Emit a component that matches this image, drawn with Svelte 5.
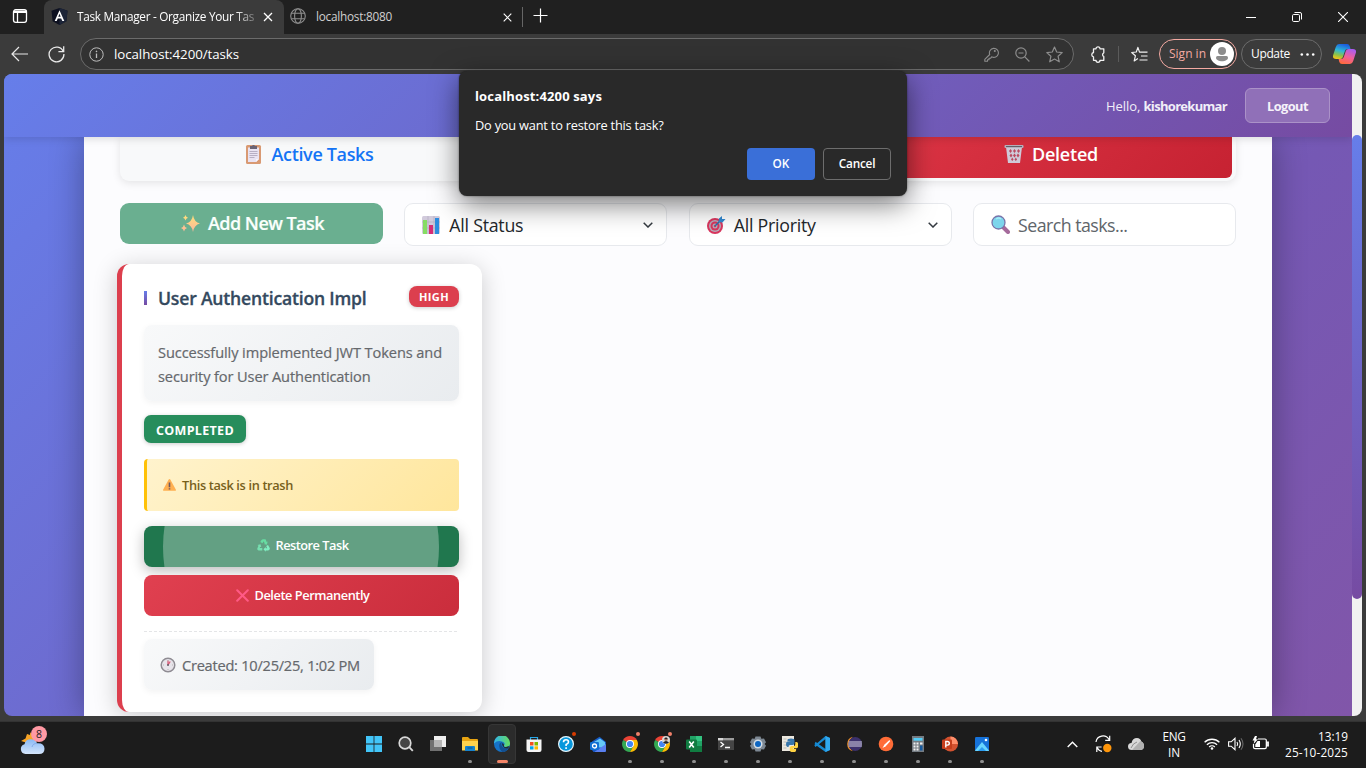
<script>
  // Spreads the letters of a label so that it fills the given width.
  function fit(node, width) {
    const n = node.textContent.length;
    const natural = node.getBoundingClientRect().width;
    node.style.letterSpacing = (width - natural) / n + 'px';
  }

  const apps = [
    { id: 'start' }, { id: 'search' }, { id: 'views' }, { id: 'files', open: true },
    { id: 'edge', active: true }, { id: 'store' }, { id: 'help', alert: '#d83b01' }, { id: 'outlook' },
    { id: 'chrome', open: true, alert: '#f0806a' }, { id: 'chromeuser', open: true, alert: '#f0806a' },
    { id: 'excel', open: true }, { id: 'terminal', open: true }, { id: 'settings', open: true },
    { id: 'python', open: true }, { id: 'code', open: true }, { id: 'eclipse', open: true },
    { id: 'postman', open: true }, { id: 'calc', open: true }, { id: 'ppt', open: true }, { id: 'photos', open: true }
  ];
</script>

{#snippet chrome()}
  <path d="M8 8L1.1 4A8 8 0 0 1 14.9 4z" fill="#ea4335" />
  <path d="M8 8L1.1 4A8 8 0 0 0 8 16l3.5-6z" fill="#34a853" />
  <path d="M8 4h6.9A8 8 0 0 1 8 16l3.5-6z" fill="#fbbc04" />
  <circle cx="8" cy="8" r="4" fill="#fff" /><circle cx="8" cy="8" r="3.1" fill="#4285f4" />
{/snippet}

<div class="window">
  <header class="tabstrip">
    <div class="workspace">
      <svg width="16" height="16" viewBox="0 0 16 16" fill="none" stroke="#fff" stroke-width="1.3"><rect x="1.5" y="1.7" width="13" height="12.6" rx="2.2" /><path d="M2 3.2h12M2 4.3h12M5.5 5v9" /></svg>
    </div>
    <div class="tab current">
      <svg width="17" height="17" viewBox="0 0 17 17"><path d="M8.5 0l8 2.8-1.1 10.5-6.900 3.700-6.900-3.700L.5 2.800z" fill="#0d1020" /><path d="M8.500 0l8 2.800-1.100 10.500-6.900 3.700z" fill="#1c2437" /><path d="M8.500 2.200L13.300 13h-2L10.200 10.400H6.800L5.700 13h-2zM8.500 5.700L7.300 8.800h2.400z" fill="#fff" fill-rule="evenodd" /></svg>
      <span class="tabname fade"><span use:fit={177}>Task Manager - Organize Your Tas</span></span>
      <svg class="x1" width="10" height="10" viewBox="0 0 10 10" stroke="#fff" stroke-width="1.300"><path d="M1 1l8 8M9 1L1 9" /></svg>
    </div>
    <div class="tab other">
      <svg width="16" height="16" viewBox="0 0 16 16" fill="none" stroke="#8d8d8d" stroke-width="1.100"><circle cx="8" cy="8" r="7.300" /><ellipse cx="8" cy="8" rx="3.400" ry="7.300" /><path d="M1.500 5.300h13M1.500 10.700h13" /></svg>
      <span class="tabname grey"><span use:fit={76}>localhost:8080</span></span>
      <svg class="x2" width="9" height="9" viewBox="0 0 9 9" stroke="#fff" stroke-width="1.100"><path d="M.7.7l7.600 7.600M8.300.7L.7 8.300" /></svg>
    </div>
    <i class="tabline"></i>
    <svg class="plus" width="15" height="15" viewBox="0 0 15 15" stroke="#fff" stroke-width="1.200"><path d="M7.500.5v14M.5 7.500h14" /></svg>
    <div class="controls">
      <svg width="10" height="10" viewBox="0 0 10 10" stroke="#fff"><path d="M0 5.500h10" /></svg>
      <svg width="10" height="10" viewBox="0 0 10 10" fill="none" stroke="#fff"><rect x=".5" y="2.500" width="7" height="7" rx="1.200" /><path d="M2.500.5H8a1.500 1.500 0 0 1 1.500 1.500v5.500" /></svg>
      <svg width="10" height="10" viewBox="0 0 10 10" stroke="#fff" stroke-width="1.100"><path d="M0 0l10 10M10 0L0 10" /></svg>
    </div>
  </header>

  <div class="toolbar">
    <svg class="back" width="17" height="16" viewBox="0 0 17 16" fill="none" stroke="#e8e8e8" stroke-width="1.200"><path d="M8 1L1 8l7 7M1 8h16" /></svg>
    <svg class="reload" width="17" height="18" viewBox="0 0 17 18" fill="none" stroke="#e8e8e8" stroke-width="1.300"><path d="M15.300 6.500A7.400 7.400 0 1 0 15.900 9M15.700 1.200v5.500h-5.300" /></svg>
    <div class="address">
      <svg width="15" height="15" viewBox="0 0 15 15" fill="none" stroke="#bdbdbd"><circle cx="7.500" cy="7.500" r="6.700" /><path d="M7.500 6.500v4.500" stroke-width="1.300" /><circle cx="7.500" cy="4.400" r=".6" fill="#bdbdbd" stroke-width=".4" /></svg>
      <span class="url"><span use:fit={125}>localhost:4200/tasks</span></span>
      <div class="addricons">
        <svg width="15" height="15" viewBox="0 0 15 15" fill="none" stroke="#8d8d8d" stroke-width="1.100" stroke-linejoin="round"><path d="M5.700 7.500L.8 12.400v1.900h2.700v-1.500H5v-1.500h1.500l1.200-1.500A4.500 4.500 0 1 0 5.700 7.500z" /><circle cx="10.800" cy="4" r=".5" /></svg>
        <svg width="15" height="15" viewBox="0 0 15 15" fill="none" stroke="#8d8d8d" stroke-width="1.200"><circle cx="6" cy="6" r="5.200" /><path d="M3.500 6h5M9.800 9.800l4.600 4.700" /></svg>
        <svg width="17" height="17" viewBox="0 0 17 17" fill="none" stroke="#8d8d8d" stroke-width="1.200" stroke-linejoin="round"><path d="M8.500 1l2.200 5 5.500.6-4.100 3.700 1.200 5.500-4.800-2.800-4.800 2.800 1.200-5.500L.8 6.600l5.500-.6z" /></svg>
      </div>
    </div>
    <svg class="ext" width="16" height="17" viewBox="0 0 16 17" fill="none" stroke="#f2f2f2" stroke-width="1.300" stroke-linejoin="round"><path d="M6 2.800A2 2 0 0 1 10 2.800H13.800V6.800A2 2 0 0 0 13.800 10.500V14.300H10A2 2 0 0 1 6 14.300H3.500V10.800A2.200 2.200 0 0 1 3.500 6.500V2.800z" /></svg>
    <i class="tooldivider"></i>
    <svg class="favs" width="17" height="17" viewBox="0 0 17 17" fill="none" stroke="#f2f2f2" stroke-width="1.200" stroke-linejoin="round"><path d="M8.500 6.100L6.900 1.400 5.300 6 .7 6.500l3.700 3.300-1.200 5.100L6.900 12.500M6.900 1.400l1.600 4.700h8M10 10h6.500M8.500 14h8" /></svg>
    <div class="signin"><span class="pilltext"><span use:fit={37}>Sign in</span></span>
      <svg width="24" height="24" viewBox="0 0 24 24"><circle cx="12" cy="12" r="12" fill="#fff" /><circle cx="12" cy="9" r="4" fill="#8c8c8c" /><path d="M6 15.500q0-1.500 1.500-1.500h9q1.500 0 1.500 1.500c0 5-12 5-12 0z" fill="#8c8c8c" /></svg>
    </div>
    <div class="update"><span class="pilltext"><span use:fit={39}>Update</span></span>
      <svg width="15" height="3" viewBox="0 0 15 3" fill="#fff"><circle cx="1.800" cy="1.500" r="1.300" /><circle cx="7.500" cy="1.500" r="1.300" /><circle cx="13.200" cy="1.500" r="1.300" /></svg>
    </div>
    <svg class="copilot" width="23" height="20" viewBox="0 0 23 20">
      <defs>
        <linearGradient id="cpa" x1=".6" y1="0" x2=".3" y2="1"><stop offset="0" stop-color="#1b5ce0" /><stop offset=".45" stop-color="#2eb8d8" /><stop offset=".75" stop-color="#8bc34a" /><stop offset="1" stop-color="#f0c419" /></linearGradient>
        <linearGradient id="cpb" x1=".7" y1="0" x2=".3" y2="1"><stop offset="0" stop-color="#a95cf0" /><stop offset=".5" stop-color="#f0609c" /><stop offset="1" stop-color="#ff6a3c" /></linearGradient>
      </defs>
      <path d="M6 0h8q2 0 2.700 2l.8 3h-3q-2 0-2.600 2l-2 6q-.6 2-2.800 2H3q-4 0-2.800-4L2.800 3Q3.700 0 6 0z" fill="url(#cpa)" />
      <path d="M17 20H9q-2 0-2.700-2l-.7-3h2.600q2 0 2.600-2l2-6q.6-2 2.800-2H20q4 0 2.800 4l-2.600 8q-.900 3-3.200 3z" fill="url(#cpb)" />
    </svg>
  </div>

  <main class="viewport">
    <div class="content">
      <nav class="navbar">
        <span class="hello"><span use:fit={37.5}>Hello,&nbsp;</span><b use:fit={83.5}>kishorekumar</b></span>
        <button class="logout"><span use:fit={41}>Logout</span></button>
      </nav>
      <div class="container">
        <div class="tabs">
          <div class="tabitem first"><svg width="18" height="20" viewBox="0 0 18 20"><rect x="1" y="1" width="15" height="19" rx="1.500" fill="#d99a73" /><path d="M3 3.500h11V15l-3 3H3z" fill="#e9e3f2" /><path d="M11 18v-3h3z" fill="#f8f5fc" /><path d="M4.500 7.500h8M4.500 9.500h8M4.500 11.500h8M4.500 13.500h5" stroke="#aaa2b8" stroke-width=".8" /><path d="M5 2h2a1.600 1.600 0 0 1 3 0h2v3H5z" fill="#6a6475" /></svg><span use:fit={102}>Active Tasks</span></div>
          <div class="tabitem mid"></div>
          <div class="tabitem deleted"><svg width="20" height="20" viewBox="0 0 20 20"><path d="M2 3l2 16h12l2-16z" fill="#cfcad8" /><path d="M5 7l1.500-2L8 7 6.500 9zM9 7l1.500-2L12 7l-1.500 2zM13 7l1.500-2L16 7l-1.500 2zM5.500 11.500L7 9.500l1.500 2-1.500 2zM9 11.500l1.500-2 1.500 2-1.500 2zM12.500 11.500l1.500-2 1.500 2-1.500 2zM7 15.500l1.300-2 1.300 2-1.300 1.500zM10.500 15.500l1.300-2 1.300 2-1.300 1.500z" fill="#bb4a60" /><rect x=".5" y="1" width="19" height="3" rx="1" fill="#b5b0bd" /><path d="M2 2.500h16" stroke="#656069" /></svg><span use:fit={66}>Deleted</span></div>
        </div>
        <div class="filters">
          <button class="add"><svg width="19" height="17" viewBox="0 0 19 17"><defs><linearGradient id="sp" x2="0" y2="1"><stop stop-color="#ffe07a" /><stop offset="1" stop-color="#ffb69c" /></linearGradient></defs><path d="M12 0q1 7 7 8.500-6 1.500-7 8.500-1-7-7-8.500Q11 7 12 0zM4.500 0q.5 2.300 2.500 2.800-2 .5-2.500 2.800-.5-2.300-2.500-2.800Q4 2.300 4.500 0zM3 9.500q.5 3 3 3.500-2.500.5-3 3.500-.5-3-3-3.500 2.500-.5 3-3.500z" fill="url(#sp)" /></svg><span use:fit={116}>Add New Task</span></button>
          <div class="field"><svg width="18" height="18" viewBox="0 0 18 18"><rect width="18" height="18" rx="1.500" fill="#d2cbdc" /><path d="M0 6h18M0 12h18M6 0v18M12 0v18" stroke="#b4adc0" stroke-width=".7" /><path d="M1 4h4v14H1z" fill="#86dd63" /><path d="M7 9h4v9H7z" fill="#d72c75" /><path d="M13 2h4v16h-4z" fill="#2d8de0" /></svg><span use:fit={74}>All Status</span><svg class="chev" width="10" height="6" viewBox="0 0 10 6" fill="none" stroke="#343a40" stroke-width="1.500"><path d="M.7.700L5 5 9.300.700" /></svg></div>
          <div class="field prio"><svg width="19" height="18" viewBox="0 0 19 18"><circle cx="8" cy="10" r="8" fill="#d9365e" /><circle cx="8" cy="10" r="6" fill="#b6adbb" /><circle cx="8" cy="10" r="4.500" fill="#d9365e" /><circle cx="8" cy="10" r="2.500" fill="#b6adbb" /><circle cx="8" cy="10" r="1.200" fill="#d9365e" /><path d="M8 10l5-5" stroke="#2873ad" stroke-width="1.500" /><path d="M11.500 6L12 2.500 15 0v3h3.500L15.500 6.500z" fill="#3188cf" /></svg><span use:fit={82}>All Priority</span><svg class="chev" width="10" height="6" viewBox="0 0 10 6" fill="none" stroke="#343a40" stroke-width="1.500"><path d="M.7.700L5 5 9.300.700" /></svg></div>
          <div class="field search"><svg width="19" height="19" viewBox="0 0 19 19"><path d="M12 12l5 5" stroke="#a56a9b" stroke-width="4" stroke-linecap="round" /><circle cx="7.500" cy="7.500" r="6.500" fill="#7dd5ec" stroke="#7974aa" stroke-width="1.300" /><path d="M5 4q3-2 5 0" stroke="#a7ecf8" stroke-width="1.500" fill="none" /></svg><span use:fit={109.5}>Search tasks...</span></div>
        </div>
        <article class="card">
          <div class="title"><i></i><h3><span use:fit={208.5}>User Authentication Impl</span></h3><span class="high"><span use:fit={30}>HIGH</span></span></div>
          <p class="desc"><span use:fit={284}>Successfully implemented JWT Tokens and</span><br /><span use:fit={212.5}>security for User Authentication</span></p>
          <div class="done"><span use:fit={78}>COMPLETED</span></div>
          <div class="trash"><svg width="13" height="12" viewBox="0 0 13 12"><path d="M6.500 0Q7 0 7.300.600l5.500 10q.400 1.100-.6 1.100H.800q-1 0-.6-1.100l5.500-10Q6 0 6.500 0z" fill="#ffb052" /><path d="M6.500 3.500v4.700M6.500 9.300v1.200" stroke="#6f5760" stroke-width="1.600" /></svg><span use:fit={111}>This task is in trash</span></div>
          <button class="restore"><i class="ripple"></i><svg width="13" height="13" viewBox="0 0 13 13"><path d="M4.200 1.500Q5 .2 6.500.3h2L9.700 3l1-.5-.8 3.200-3-.8 1-.5L6.500 2.300 5.500 4.200 3.300 3z" fill="#67dca2" /><path d="M11 6l1.700 3q.500 2-1.500 2.500H8.700v1.200L6.500 10.300l2.200-2.200v1.100h1.500L9.200 7.100z" fill="#80efc2" /><path d="M.500 6l3-.800.800 3-1-.5-.7 1.400h2.700v2.400H1.700Q-.3 10.800.500 9l1-2.300z" fill="#76dfb0" /></svg><span use:fit={73}>Restore Task</span></button>
          <button class="remove"><svg width="13" height="13" viewBox="0 0 13 13" stroke="#ff5a86" stroke-width="2" stroke-linecap="round"><path d="M1.200 1.200l10.600 10.600M11.800 1.200L1.200 11.800" /></svg><span use:fit={115}>Delete Permanently</span></button>
          <div class="foot"><div class="created"><svg width="16" height="16" viewBox="0 0 16 16"><circle cx="8" cy="8" r="6.800" fill="#e7e4ea" stroke="#8f8c93" stroke-width="1.500" /><path d="M8 3.500V8M10.200 4.500L8 8" stroke="#d85c78" stroke-width="1.300" /><path d="M8 3v.8M13 8h-.8M8 13v-.8M3 8h.8" stroke="#aaa" /><circle cx="8" cy="8" r="1" fill="#605b68" /></svg><span use:fit={178}>Created: 10/25/25, 1:02 PM</span></div></div>
        </article>
      </div>
    </div>
    <div class="scroll"><i></i></div>
  </main>

  <footer class="taskbar">
    <div class="weather"><svg width="30" height="30" viewBox="0 0 30 30"><defs><linearGradient id="cl" x2="0" y2="1"><stop stop-color="#8ab9f5" /><stop offset="1" stop-color="#d4e5fb" /></linearGradient></defs><path d="M10 6l2.500 4L17 9l-1 10-8 1-2-3.500L1 15l4.500-2.500L7 8l3 1z" fill="#f6a326" /><path d="M5.500 28a5 5 0 0 1-1-9.800Q5.600 13 11 13.200q4.500.2 6 4 7.500-.5 7.500 5.600 0 5.200-5.500 5.200z" fill="url(#cl)" /><path d="M12 21q1-4 5-3.500" stroke="#83aceb" fill="none" /><circle cx="19" cy="8" r="8" fill="#ff99a4" /><text x="19" y="11.800" text-anchor="middle" font-size="10.500" fill="#1c1c1c">8</text></svg></div>
    <div class="apps">
      {#each apps as app}
        <div class="app" class:active={app.active}>
          <svg width="16" height="16" viewBox="0 0 16 16">
            {#if app.id === 'start'}
              <path d="M0 0h7.600v7.600H0zM8.400 0H16v7.600H8.400zM0 8.400h7.600V16H0zM8.400 8.400H16V16H8.400z" fill="#42c5f8" />
            {:else if app.id === 'search'}
              <circle cx="7" cy="7" r="5.800" fill="#444" stroke="#d8d8d8" stroke-width="1.700" /><path d="M11.200 11.200l3.600 3.600" stroke="#d8d8d8" stroke-width="1.900" />
            {:else if app.id === 'views'}
              <path d="M4 0h12v11H4z" fill="#eee" /><path d="M0 4h12v11H0z" fill="#707070" /><path d="M4 4h8v7H4z" fill="#b5b5b5" />
            {:else if app.id === 'files'}
              <path d="M0 2q0-1 1-1h5l2 2h7q1 0 1 1v10H0z" fill="#e8a412" /><path d="M0 5h16v9.500H0z" fill="#ffd34d" /><path d="M3 15v-4q0-1 1-1h8q1 0 1 1v4z" fill="#1682cc" /><path d="M5.500 12h5" stroke="#0a568e" />
            {:else if app.id === 'edge'}
              <defs><linearGradient id="eg"><stop stop-color="#31b4ec" /><stop offset="1" stop-color="#66dc5e" /></linearGradient></defs>
              <circle cx="8" cy="8" r="8" fill="#1673c7" /><path d="M0 7.500A8 8 0 0 1 16 7q.3 4-4 4-2.500 0-2-1.500 2-3-2-4Q3.500 4 0 7.500z" fill="url(#eg)" /><path d="M5.200 10Q5 6.500 8.500 6 6.500 7.500 8 10.200q2 3 6.300 2.200Q12 16 8 16q-2.800-2.500-2.800-6z" fill="#134f91" /><path d="M8.300 7q2 .500 1.700 2.500-.5 1.500 2 1.500l3-1-.500 2.200q-4 .8-5.500-1.700-1.500-2-.7-3.500z" fill="#222b36" />
            {:else if app.id === 'store'}
              <path d="M4.500 4V1.500h7V4" fill="none" stroke="#28a8e8" stroke-width="1.200" /><path d="M.5 3.500h15V14q0 2-2 2h-11q-2 0-2-2z" fill="#f4f4f4" /><path d="M4 6h3.500v3.500H4z" fill="#f25022" /><path d="M8.500 6H12v3.500H8.500z" fill="#7fba00" /><path d="M4 10.300h3.500V13.500H4z" fill="#00a4ef" /><path d="M8.500 10.300H12V13.500H8.500z" fill="#ffb900" />
            {:else if app.id === 'help'}
              <circle cx="8" cy="8" r="7.400" fill="#0797dc" stroke="#e8f6fc" stroke-width="1.200" /><path d="M5.500 6.200Q5.500 3.800 8 3.800t2.500 2.200Q10.500 7.500 8.100 8.500v1.600M8.100 11.300v1.700" fill="none" stroke="#fff" stroke-width="1.600" />
            {:else if app.id === 'outlook'}
              <path d="M2 5.500L9.500.7 16 6v8.500q0 1.500-1.500 1.500h-11L2 14z" fill="#1759c4" /><path d="M4 6l6-3.500 5 3.700V12L4 11z" fill="#65c9f7" /><path d="M5 15.500L16 8v6.500q0 1.500-1.500 1.500H5z" fill="#5a7ff0" /><rect y="6" width="9" height="8" rx="1.200" fill="#1070d4" /><circle cx="4.500" cy="10" r="2" fill="none" stroke="#fff" stroke-width="1.300" />
            {:else if app.id === 'chrome'}
              {@render chrome()}
            {:else if app.id === 'chromeuser'}
              {@render chrome()}
              <circle cx="12" cy="4" r="4" fill="#d7d7d7" /><circle cx="12" cy="3.200" r="1.600" fill="#9a6650" /><path d="M10.400 3a1.600 1.600 0 0 1 3.200 0zM9 6.500q3-3.200 6 0-3 2.500-6 0z" fill="#20242a" />
            {:else if app.id === 'excel'}
              <path d="M4 0h12v16H4z" fill="#107c41" /><path d="M4 0h6v5H4z" fill="#21a366" /><path d="M10 0h6v5h-6z" fill="#33c481" /><path d="M10 5h6v5h-6z" fill="#21a366" /><rect y="3.500" width="11" height="10" rx="1" fill="#107c41" /><path d="M3.200 5.500L7.800 11.500M7.800 5.500L3.200 11.500" stroke="#fff" stroke-width="1.600" />
            {:else if app.id === 'terminal'}
              <path d="M0 2h16v12H0z" fill="#454545" /><path d="M0 2h16v2.300H0z" fill="#9d9d9d" /><path d="M0 2h5v2.300H0z" fill="#d8d8d8" /><path d="M2.500 6L5.500 8.500 2.500 11M7 11.500h5" fill="none" stroke="#fff" stroke-width="1.300" />
            {:else if app.id === 'settings'}
              <path d="M5.500.6h5l.8 2.200 2.700-.4L16 6.200 14.600 8 16 9.800l-2 3.800-2.700-.4-.8 2.200h-5l-.8-2.200-2.700.4L0 9.800 1.400 8 0 6.200l2-3.800 2.700.4z" fill="#7d8893" /><circle cx="8" cy="8" r="4.500" fill="#d3dee7" /><circle cx="8" cy="8" r="3" fill="#0d66c2" />
            {:else if app.id === 'python'}
              <path d="M0 0h12v15H0z" fill="#ece8df" /><path d="M1.500 3h3M1.500 6h3M1.500 9h3M1.500 12h3" stroke="#aaa" stroke-width=".7" /><path d="M5.500 5V4Q5.500 2.500 9 2.500t3.500 1.500v3Q12.500 9 10.500 9H8Q6.500 9 6.500 11H5.500Q4 11 4 8.200T5.500 5.500H9" fill="#3776ab" /><path d="M13.300 6h1Q16.300 6 16.300 9t-2 3.200h-3.200v.8h3v1.200q0 2-3 2t-3.300-2v-2.700Q7.800 10 10 10h2q1.300-.2 1.300-2z" fill="#ffd343" />
            {:else if app.id === 'code'}
              <path d="M11.500 0L16 2v12l-4.500 2L2 9.300l-1.500-1L1.500 5.700 11.500 13V3L1.500 11 .3 9.500z" fill="#1689d2" /><path d="M11.500 0L16 2v12l-4.500 2z" fill="#30a8ef" />
            {:else if app.id === 'eclipse'}
              <path d="M7 .7A7.500 7.500 0 0 0 7 15.300 9 9 0 0 1 7 .7z" fill="#f79428" /><circle cx="9.200" cy="8" r="6.900" fill="#3c316c" /><path d="M2.500 6h13.400M2.300 8h13.900M2.500 10h13.400" stroke="#d7d6e6" stroke-width="1.200" />
            {:else if app.id === 'postman'}
              <circle cx="8" cy="8" r="7.300" fill="#ff6c37" /><path d="M4.500 12l2-3.500 5-4.500.7 1.200-4.500 5z" fill="#fff" />
            {:else if app.id === 'calc'}
              <path d="M2 0h12v16H2z" fill="#747b82" /><path d="M3.500 2h9v2.700h-9z" fill="#54cdf7" /><path d="M3.500 6.500h2v2h-2zM6.500 6.500h2v2h-2zM3.500 9.500h2v2h-2zM6.500 9.500h2v2h-2zM3.500 12.500h2v2h-2zM6.500 12.500h2v2h-2zM10 6.500h2.500v2H10z" fill="#f1f1f1" /><path d="M10 9.500h2.500v5H10z" fill="#155aa0" />
            {:else if app.id === 'ppt'}
              <circle cx="8.500" cy="8" r="7.500" fill="#d35230" /><path d="M8.500.5A7.500 7.500 0 0 1 16 8H8.500z" fill="#ff8f6b" /><rect y="3.500" width="10" height="9.500" rx="1" fill="#c43e1c" /><path d="M3.800 11.500V5.500h1.700a1.700 1.700 0 0 1 0 3.600H3.800" fill="none" stroke="#fff" stroke-width="1.400" />
            {:else}
              <rect x="1" y="1" width="14" height="14" rx="1.200" fill="#1672d9" /><path d="M1 14.500L8 6l7 8.500q0 .5-.7.500H1.500z" fill="#68d5ff" /><path d="M4 15l4-4 4 4z" fill="#2b9cf0" /><circle cx="12" cy="4" r="1.300" fill="#fff" />
            {/if}
          </svg>
          {#if app.alert}<b style:background={app.alert}></b>{/if}
          {#if app.open || app.active}<i></i>{/if}
        </div>
      {/each}
    </div>
    <div class="tray">
      <svg class="up" width="11" height="7" viewBox="0 0 11 7" fill="none" stroke="#fff" stroke-width="1.400"><path d="M.7 6L5.500 1.200 10.300 6" /></svg>
      <svg class="sync" width="17" height="18" viewBox="0 0 17 18" fill="none" stroke="#fff" stroke-width="1.200"><path d="M1 7A7 7 0 0 1 14 4.500M14.700.8v4.500h-4.500M1.800 17v-5h4.800M2 12.500q2 3.500 5 3.800" /><circle cx="12.300" cy="13" r="4.200" fill="#ff960a" stroke="none" /></svg>
      <svg class="cloud" width="16" height="12" viewBox="0 0 16 12"><path d="M4 12Q0 12 0 8.500T3.500 5Q4.500 0 9 0q3.500 0 4.300 3.500Q16 4.500 16 8q0 4-4 4z" fill="#d8d8d8" /><path d="M4 12L12.500 3Q16 4.500 16 8q0 4-4 4z" fill="#b0b0b0" /><path d="M3 10q2-5 6-6" stroke="#8f8f8f" fill="none" /></svg>
      <div class="lang"><span use:fit={23}>ENG</span><span use:fit={12}>IN</span></div>
      <svg class="wifi" width="16" height="12" viewBox="0 0 16 12" fill="none" stroke="#fff" stroke-width="1.300"><path d="M.6 4.300a10.500 10.500 0 0 1 14.800 0M2.900 6.700a7.200 7.200 0 0 1 10.200 0M5.200 9a4 4 0 0 1 5.600 0" /><circle cx="8" cy="10.500" r="1.300" fill="#fff" stroke="none" /></svg>
      <svg class="vol" width="16" height="14" viewBox="0 0 16 14" fill="none" stroke="#fff" stroke-width="1.100"><path d="M.6 4.800h2.600L7 1.300v11.400L3.200 9.200H.6zM9 5q1.300 2 0 4M11 3q2.600 4 0 8" /><path d="M13 1.300q4 5.700 0 11.400" stroke="#666" /></svg>
      <svg class="batt" width="17" height="14" viewBox="0 0 17 14" fill="none" stroke="#fff" stroke-width="1.200"><path d="M6 3h7q1.300 0 1.300 1.300v7q0 1.300-1.300 1.300H3Q1.500 12.600 1.500 11.300V8M15 6v4h1.300V6z" /><path d="M3.300 8.500L5.500 5H8v6H3.300z" fill="#fff" stroke="none" /><path d="M3 0L.5 4.500h2L1.500 8 6 3.300H4L5 0z" fill="#fff" stroke="none" /></svg>
      <div class="clock"><span use:fit={30}>13:19</span><span use:fit={63}>25-10-2025</span></div>
    </div>
  </footer>

  <div class="dialog" role="dialog">
    <h2><span use:fit={127}>localhost:4200 says</span></h2>
    <p><span use:fit={188.500}>Do you want to restore this task?</span></p>
    <div class="actions"><button class="ok"><span use:fit={17}>OK</span></button><button class="cancel"><span use:fit={36.500}>Cancel</span></button></div>
  </div>
</div>

<style>
  :global(body) { margin: 0; overflow: hidden; }
  .window, .window :global(*) { box-sizing: border-box; }
  .window { position: relative; display: flex; flex-direction: column; width: 1366px; height: 768px; background: #3b3b3b; font-family: 'Open Sans', 'Noto Sans', sans-serif; color: #fff; overflow: hidden; white-space: nowrap; }
  svg { display: block; flex: none; }
  button { font: inherit; color: inherit; border: 0; padding: 0; margin: 0; display: flex; align-items: center; justify-content: center; }
  h2, h3, p { margin: 0; }

  .tabstrip { display: flex; height: 34px; background: #202020; align-items: center; }
  .workspace { width: 44px; height: 34px; padding: 8px 0 0 12px; }
  .tab { display: flex; align-items: center; height: 34px; font-size: 11.800px; }
  .current { width: 240px; background: #3b3b3b; border-radius: 8px 8px 0 0; padding: 0 0 2px 7px; }
  .tabname { line-height: 16px; }
  .current .tabname { margin-left: 9px; width: 178px; }
  .fade { mask-image: linear-gradient(90deg, #000 158px, #0004 178px); }
  .x1 { margin-left: 8px; margin-top: 2px; }
  .other { width: 238px; padding: 0 0 2px 6px; }
  .grey { color: #d0d0d0; margin-left: 10px; width: 187px; }
  .x2 { margin-top: 2px; }
  .tabline { width: 1px; height: 20px; background: #666; }
  .plus { margin: 0 0 3px 10px; }
  .controls { display: flex; gap: 36px; margin-left: auto; padding-right: 18px; }

  .toolbar { display: flex; align-items: center; height: 40px; }
  .back { margin-left: 11px; }
  .reload { margin-left: 20px; }
  .address { display: flex; align-items: center; width: 994px; height: 32px; margin-left: 15px; padding: 0 10px 0 8px; border: 1px solid #6b6b6b; border-radius: 16px; background: #323232; }
  .url { margin-left: 10px; font-size: 13.300px; }
  .addricons { display: flex; align-items: center; gap: 16px; margin-left: auto; }
  .ext { margin-left: 16px; }
  .tooldivider { width: 1px; height: 16px; margin-left: 12px; background: #5b5b5b; }
  .favs { margin-left: 12px; }
  .signin { display: flex; align-items: center; width: 78px; height: 30px; margin-left: 11px; padding-left: 9px; border: 1px solid #f4aaa2; border-radius: 15px; gap: 4px; color: #f4aaa2; }
  .pilltext { font-size: 12px; margin-top: -2px; }
  .update { display: flex; align-items: center; width: 81px; height: 30px; margin-left: 4px; padding-left: 9px; border: 1px solid #6b6b6b; border-radius: 15px; gap: 10px; }
  .copilot { margin-left: 11px; }

  .viewport { display: flex; width: 1358px; height: 642px; margin-left: 4px; border-radius: 8px; overflow: hidden; }
  .content { width: 1348px; overflow: hidden; background: linear-gradient(135deg, #667eea 0%, #7558b4 70%, #8156a9 100%); }
  .navbar { position: relative; z-index: 1; display: flex; align-items: center; justify-content: flex-end; height: 63px; padding-right: 22px; background: linear-gradient(135deg, #667eea 0%, #764ba2 100%); box-shadow: 0 2px 8px #0002; }
  .hello { font-size: 13px; color: #f1eef8; }
  .hello b { font-weight: 700; display: inline-block; }
  .logout { width: 85px; height: 35px; margin-left: 18px; border: 1px solid #ab92c8; border-radius: 6px; background: #9070b8; font-size: 12.800px; font-weight: 700; color: #f6f2fa; }
  .container { width: 1188px; height: 579px; margin-left: 80px; padding: 0 36px; background: #fcfcfe; box-shadow: 0 0 32px #0005; }
  .tabs { display: flex; gap: 8px; height: 44px; padding: 0 4px; background: #f8f9fa; border-radius: 0 0 9px 9px; box-shadow: 0 2px 8px #0000001a; }
  .tabitem { flex: 1; display: flex; align-items: center; justify-content: center; gap: 9px; height: 41px; padding-bottom: 7px; font-size: 18px; font-weight: 600; color: #1474f5; border-radius: 0 0 6px 6px; }
  .first { padding-left: 4px; }
  .deleted { gap: 8px; padding-left: 2px; color: #fff; background: linear-gradient(135deg, #dc3545, #c62232); }
  .filters { display: grid; grid-template-columns: repeat(4, 263px); justify-content: space-between; height: 43px; margin-top: 22px; }
  .add { height: 41px; gap: 8px; padding: 0 0 1px 2px; border-radius: 9px; background: #6aaf90; font-size: 18px; font-weight: 600; color: #fafffc; -webkit-text-stroke: .2px #fafffc; }
  .field { display: flex; align-items: center; height: 43px; padding: 0 13px 0 17px; gap: 9px; border: 1px solid #e7e9ed; border-radius: 9px; background: #fff; font-size: 17.800px; color: #23272b; font-weight: 400; }
  .prio { gap: 8px; }
  .chev { margin-left: auto; }
  .search { color: #60656a; gap: 8px; }
  .card { width: 365px; height: 448px; margin: 18px 0 0 -3px; padding: 22px 23px 0 22px; border-left: 5px solid #dc3f4e; border-radius: 12px; background: #fff; box-shadow: 0 4px 24px #0003; color: #65686c; }
  .title { display: flex; height: 39px; }
  .title > i { width: 3px; height: 14px; margin-top: 5px; background: linear-gradient(#667eea, #764ba2); }
  h3 { margin-left: 11px; font-size: 17.600px; line-height: 25px; font-weight: 600; color: #34495e; -webkit-text-stroke: .3px #34495e; }
  .high { width: 50px; height: 21px; margin-left: auto; border-radius: 8px; background: #dc3f4e; color: #fff; font-size: 11px; font-weight: 700; line-height: 21px; text-align: center; box-shadow: 0 1px 4px #0003; }
  .desc { height: 76px; padding: 15px 14px; border-radius: 8px; background: linear-gradient(135deg, #f8f9fa, #e9ecef); box-shadow: 0 2px 6px #0000000d; font-size: 14.600px; line-height: 24px; font-weight: 500; -webkit-text-stroke: .2px #65686c; }
  .done { width: 102px; height: 28px; margin-top: 14px; padding-left: 12px; border-radius: 7px; background: #278d5c; color: #fff; font-size: 12.500px; font-weight: 700; line-height: 31px; box-shadow: 0 1px 4px #0003; }
  .trash { display: flex; align-items: center; gap: 6px; height: 52px; margin-top: 16px; padding-left: 16px; border-left: 3px solid #ffc107; border-radius: 4px; background: linear-gradient(135deg, #fff3cd, #ffe69c); color: #77601c; font-size: 12.800px; font-weight: 600; }
  .restore, .remove { position: relative; width: 315px; height: 41px; border-radius: 8px; gap: 6px; overflow: hidden; color: #fff; font-size: 12.800px; font-weight: 600; padding: 0 0 1px 2px; }
  .restore { margin-top: 15px; padding-bottom: 3px; background: #20774e; box-shadow: 0 4px 14px #0004; }
  .restore svg, .restore span { position: relative; }
  .ripple { position: absolute; left: 19px; top: -117px; width: 276px; height: 276px; border-radius: 50%; background: #ffffff4d; }
  .remove { margin-top: 8px; background: linear-gradient(135deg, #e04050, #ca2d3c); }
  .foot { margin-top: 15px; padding-top: 8px; background: repeating-linear-gradient(90deg, #e4e5e7 0 3px, transparent 3px 5px) top / 100% 1px no-repeat; }
  .created { display: flex; align-items: center; gap: 6px; width: 230px; height: 51px; padding-left: 16px; border-radius: 8px; background: linear-gradient(135deg, #f8f9fa, #e9ecef); box-shadow: 0 2px 6px #0000000d; font-size: 14.600px; font-weight: 500; -webkit-text-stroke: .2px #65686c; }
  .scroll { width: 10px; padding-top: 61px; background: #f1f1f1; }
  .scroll i { display: block; height: 464px; border-radius: 5px; background: linear-gradient(#667eea, #764ba2); }

  .taskbar { display: grid; grid-template-columns: 358px 640px 1fr; height: 47px; margin-top: 5px; background: #1c1c1c; border-top: 1px solid #333; }
  .weather { padding: 4px 0 0 20px; }
  .apps { display: flex; }
  .app { position: relative; width: 32px; height: 46px; padding: 14px 8px; }
  .active::before { content: ''; position: absolute; inset: 2px 2px 4px; border: 1px solid #363636; border-radius: 4px; background: #2b2b2b; }
  .app svg { position: relative; }
  .app i { position: absolute; left: 14px; bottom: 5px; width: 4px; height: 3px; border-radius: 2px; background: #8f8f8f; }
  .app.active i { left: 10.500px; width: 11px; background: #f48568; }
  .app b { position: absolute; right: 6px; top: 10px; width: 4px; height: 4px; border-radius: 50%; }
  .tray { display: flex; align-items: center; padding-bottom: 2px; font-size: 11.800px; line-height: 16px; }
  .up { margin-left: 69px; }
  .sync { margin-left: 17px; }
  .cloud { margin-left: 16px; }
  .lang { display: flex; flex-direction: column; align-items: center; width: 24px; margin-left: 18px; }
  .wifi { margin-left: 18px; }
  .vol { margin-left: 8px; }
  .batt { margin: 0 0 2px 8px; }
  .clock { display: flex; flex-direction: column; align-items: flex-end; margin-left: auto; padding-right: 18px; }

  .dialog { position: absolute; left: 459px; top: 71px; z-index: 5; width: 448px; height: 125px; padding: 15px 16px; border-radius: 8px; background: #292929; box-shadow: 0 0 2px #0008, 0 8px 28px #0008; }
  h2 { font-size: 13px; line-height: 20px; font-weight: 700; }
  .dialog p { margin-top: 9px; font-size: 12.800px; line-height: 20px; }
  .actions { display: flex; justify-content: flex-end; gap: 8px; margin-top: 13px; font-size: 11.800px; font-weight: 600; }
  .actions button { width: 68px; height: 32px; padding-bottom: 2px; border-radius: 4px; }
  .ok { background: #3a6fd8; }
  .cancel { background: transparent; border: 1px solid #6d6d6d; }
</style>
